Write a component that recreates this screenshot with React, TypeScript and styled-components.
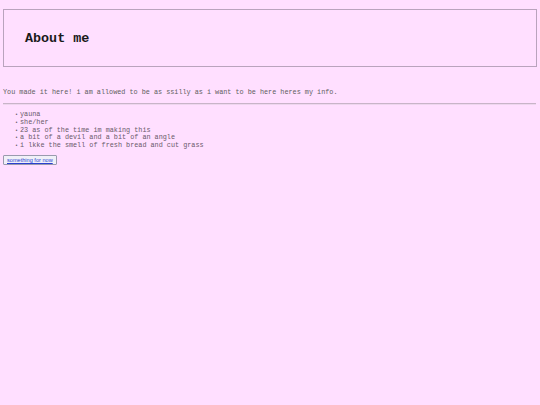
import React from "react";
import styled, { createGlobalStyle } from "styled-components";

const mono = `"Liberation Mono", "Courier New", monospace`;

const GlobalStyle = createGlobalStyle`
  html, body {
    margin: 0;
    padding: 0;
    background-color: #ffdfff;
  }
  body {
    padding: 9px 3px 0 3px;
    font-family: ${mono};
    color: #6a5a6a;
  }
`;

const Header = styled.header`
  display: flex;
  align-items: center;
  height: 56px;
  padding-left: 21px;
  border: 1px solid #b9a3bd;
`;

const Title = styled.h1`
  margin: 0;
  font-family: ${mono};
  font-size: 13.4px;
  font-weight: bold;
  color: #1a1a1a;
`;

const Intro = styled.p`
  margin: 21px 0 0 0;
  font-size: 6.8px;
  line-height: 9px;
  color: #5e5e5e;
`;

const Rule = styled.hr`
  margin: 6px 1px 0 0;
  border: none;
  height: 1px;
  background: #c8b4c8;
  border-bottom: 1px solid #eed6ee;
`;

const List = styled.ul`
  margin: 6px 0 0 0;
  padding-left: 12px;
  font-size: 6.8px;
  line-height: 7.8px;
  color: #6a5a6a;
  list-style: none;
`;

const Item = styled.li`
  height: 7.8px;
  &::before {
    content: "•";
    margin-right: 2px;
    font-size: 5px;
    line-height: 0;
  }
`;

const Button = styled.button`
  margin-top: 5px;
  display: block;
  padding: 1px 3px;
  font-family: "Liberation Sans", Arial, sans-serif;
  font-size: 5.6px;
  line-height: 6px;
  color: #2a3fd0;
  text-decoration: underline;
  background: #f0f0f8;
  border: 1px solid #9a9aae;
  border-radius: 1px;
  cursor: pointer;
`;

const items = [
  "yauna",
  "she/her",
  "23 as of the time im making this",
  "a bit of a devil and a bit of an angle",
  "i lkke the smell of fresh bread and cut grass",
];

export default function App() {
  return (
    <>
      <GlobalStyle />
      <Header>
        <Title>About me</Title>
      </Header>
      <Intro>
        You made it here! i am allowed to be as ssilly as i want to be here heres my info.
      </Intro>
      <Rule />
      <List>
        {items.map((t) => (
          <Item key={t}>{t}</Item>
        ))}
      </List>
      <Button>something for now</Button>
    </>
  );
}
